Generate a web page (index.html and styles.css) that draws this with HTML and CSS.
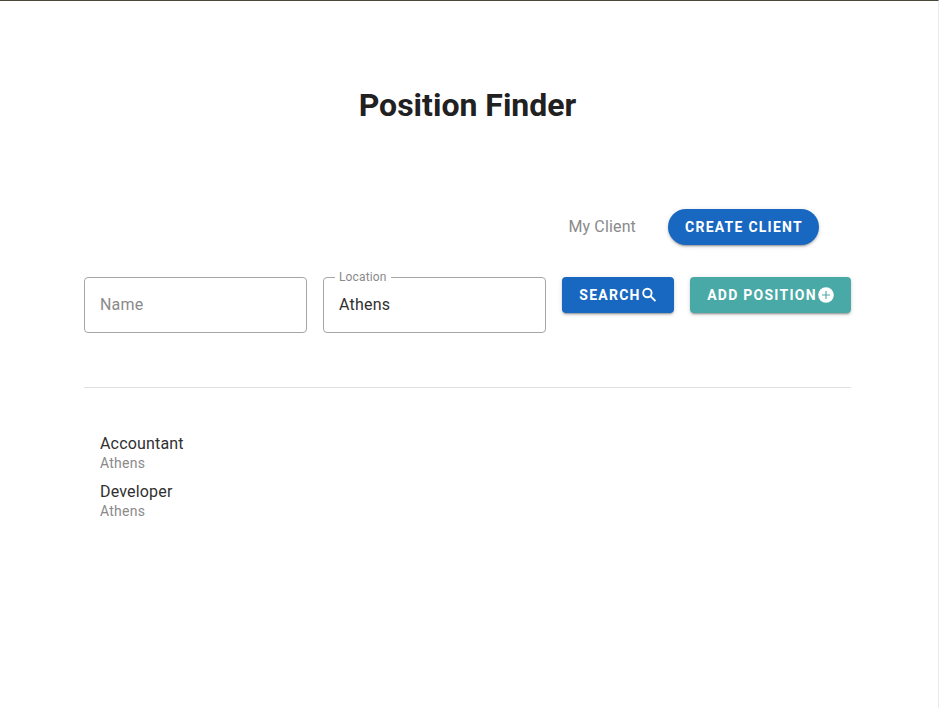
FILE: index.html
```html
<!DOCTYPE html>
<html lang="en">
<head>
<meta charset="utf-8">
<title>Position Finder</title>
<link rel="stylesheet" href="styles.css">
</head>
<body>
<main class="page">
  <h1 class="title">Position Finder</h1>
  <div class="client-row">
    <span class="client-name">My Client</span>
    <button class="btn btn-round">CREATE CLIENT</button>
  </div>
  <form class="search-row">
    <fieldset class="field"><span class="placeholder">Name</span></fieldset>
    <fieldset class="field"><legend class="label"><span class="label-text">Location</span></legend><span class="value">Athens</span></fieldset>
    <button class="btn btn-search" type="button"><span>SEARCH</span><svg class="icon" viewBox="0 0 18 18"><circle cx="6.4" cy="7" r="4.2"/><path d="M9.5 10.1l5 5"/></svg></button>
    <button class="btn btn-add" type="button"><span>ADD POSITION</span><svg class="icon icon-plus" viewBox="0 0 18 18"><circle cx="9" cy="9" r="7.8"/><path d="M5 9h8M9 5v8"/></svg></button>
  </form>
  <hr class="divider">
  <ul class="list">
    <li class="item"><div class="role">Accountant</div><div class="place">Athens</div></li>
    <li class="item"><div class="role">Developer</div><div class="place">Athens</div></li>
  </ul>
</main>
</body>
</html>
```
FILE: styles.css
```css
* { box-sizing: border-box; }
body { margin: 0; background: #fff; color: #212121; font-family: Roboto, sans-serif; line-height: 1.5; }
.page { height: 708px; overflow: hidden; border-top: 1px solid #4a4738; border-right: 1px solid #ebebeb; padding: 80px 87px 0 84px; }
.title { margin: 0; text-align: center; font-size: 32px; line-height: 48px; font-weight: 700; }
.client-row { display: flex; justify-content: flex-end; align-items: center; gap: 32px; height: 36px; margin: 80px 32px 0 0; }
.client-name { color: #8a8a8a; font-size: 16px; letter-spacing: .15px; }
.btn { display: flex; align-items: center; justify-content: center; height: 36px; padding: 0 0 0 1px; border: 0; border-radius: 4px; color: #fff; background: #1867c0; font: 700 14px/20px Roboto, sans-serif; letter-spacing: 1.25px; white-space: nowrap; box-shadow: 0 3px 1px -2px rgba(0,0,0,.2), 0 2px 2px rgba(0,0,0,.14), 0 1px 5px rgba(0,0,0,.12); }
.btn-round { width: 151px; border-radius: 18px; }
.btn-search { width: 112px; padding-left: 2px; }
.btn-add { width: 161px; background: #48a9a6; }
.icon { width: 18px; height: 18px; fill: none; stroke: #fff; stroke-width: 1.9; flex: none; }
.icon-plus { fill: #fff; stroke: #48a9a6; stroke-width: 1.1; }
.icon-plus circle { stroke: none; }
.search-row { display: flex; gap: 16px; align-items: flex-start; margin-top: 32px; }
.field { display: block; width: 223px; height: 56px; min-width: 0; margin: 0; padding: 0 15px; border: 1px solid #a6a6a6; border-radius: 4px; font-size: 16px; line-height: 54px; letter-spacing: .2px; }
.label { height: 0; margin-left: -4px; padding: 0 4px; color: #8a8a8a; font-size: 12px; line-height: 0; letter-spacing: .15px; }
.label-text { position: relative; top: -1px; }
.placeholder { color: #8a8a8a; }
.value, .role { color: #303030; }
.divider { height: 1px; margin: 54px 0 0; border: 0; background: #e0e0e0; }
.list { margin: 44px 0 0; padding: 0 16px; list-style: none; }
.item { height: 48px; }
.role { font-size: 16px; line-height: 24px; letter-spacing: .18px; }
.place { margin-top: -1px; color: #8a8a8a; font-size: 14px; line-height: 16px; letter-spacing: .25px; }
```
